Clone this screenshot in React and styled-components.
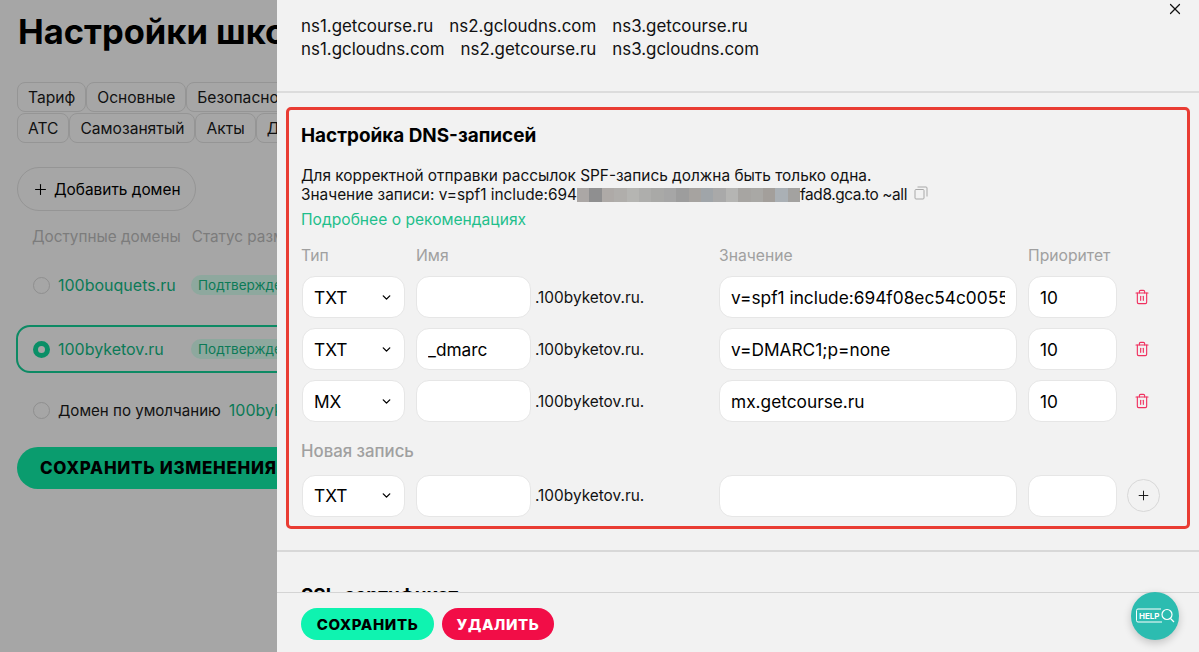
import React from 'react';
import styled, { createGlobalStyle } from 'styled-components';
import { ChevronDown, Plus, Trash2, X } from 'lucide-react';

const GlobalStyle = createGlobalStyle`
  html, body {
    margin: 0;
    height: 100%;
    overflow: hidden;
    font-family: Inter, "Noto Sans", sans-serif;
    color: #000;
  }
  * { box-sizing: border-box; }
`;

const Page = styled.div`
  display: flex;
  width: 1199px;
  height: 652px;
  overflow: hidden;
  background: #a6a6a6;
`;

/* settings page behind the overlay */
const Back = styled.div`
  flex: 0 0 277px;
  overflow: hidden;
  padding: 12px 0 0 17px;
`;

const Inner = styled.div`
  width: 620px;
`;

const PageTitle = styled.h1`
  margin: 0 0 30px 1px;
  font-size: 34.5px;
  line-height: 40px;
  font-weight: 700;
`;

const Tabs = styled.div`
  display: flex;
  flex-wrap: wrap;
  width: 340px;
  gap: 1px 0;
`;

const Tab = styled.div`
  height: 30px;
  padding: 0 10px;
  display: flex;
  align-items: center;
  font-size: 15.6px;
  border: 1px solid #959595;
  border-radius: 8px;
  color: #111;
`;

const AddDomain = styled.div`
  display: inline-flex;
  align-items: center;
  gap: 5px;
  height: 44px;
  margin-top: 24px;
  padding: 0 14px;
  font-size: 15.4px;
  border: 1px solid #959595;
  border-radius: 22px;
`;

const DomainHead = styled.div`
  display: flex;
  gap: 11px;
  margin: 16px 0 0 15px;
  font-size: 15.3px;
  line-height: 20px;
  color: #7c7c7c;
`;

const DomainRow = styled.div`
  display: flex;
  align-items: center;
  height: 48px;
  margin: ${p => p.$mt}px 0 0 -1px;
  padding-left: 15px;
  gap: 8px;
  border: 2px solid ${p => (p.$active ? '#0d8a64' : 'transparent')};
  border-radius: 14px;
`;

const Radio = styled.span`
  flex: none;
  width: 17px;
  height: 17px;
  border-radius: 50%;
  border: ${p => (p.$on ? '5px solid #0a8f67' : '1px solid #8f8f8f')};
`;

const DomainName = styled.span`
  width: 125px;
  font-size: 16px;
  color: #0c7a57;
`;

const Badge = styled.span`
  padding: 2px 7px;
  font-size: 13.5px;
  line-height: 16px;
  color: #0c7a57;
  background: #8ea89e;
  border-radius: 10px;
`;

const DefaultText = styled.span`
  font-size: 15.1px;
  color: #111;
`;

const DefaultDomain = styled.span`
  font-size: 16px;
  color: #0c7a57;
`;

const SaveChanges = styled.div`
  display: flex;
  align-items: center;
  width: 320px;
  height: 42px;
  margin-top: 13px;
  padding-left: 23px;
  font-size: 17px;
  font-weight: 800;
  letter-spacing: 0.7px;
  white-space: nowrap;
  background: #0a9c6e;
  border-radius: 21px;
`;

/* side panel */
const Panel = styled.div`
  position: relative;
  flex: 1;
  display: flex;
  flex-direction: column;
  min-width: 0;
  background: #f2f2f2;
`;

const Close = styled.button`
  position: absolute;
  top: 0;
  right: 15px;
  display: flex;
  padding: 0;
  border: none;
  background: none;
  color: #111;
`;

const Body = styled.div`
  flex: 1;
  min-height: 0;
  overflow: hidden;
`;

const Servers = styled.div`
  height: 93px;
  padding: 15px 0 0 24px;
  font-size: 16.9px;
  line-height: 23px;
  color: #111;
  border-bottom: 2px solid #dcdcdc;
`;

const ServerRow = styled.div`
  display: flex;
  gap: 16px;
`;

const DnsBox = styled.section`
  height: 422px;
  margin: 14px 9px 0 9px;
  padding: 14px 11px 0 12px;
  border: 3px solid #e93c33;
  border-radius: 5px;
`;

const BoxTitle = styled.h2`
  margin: 0 0 18px;
  font-size: 18.9px;
  line-height: 24px;
  font-weight: 700;
`;

const Note = styled.div`
  font-size: 15.4px;
  line-height: 19px;
  color: #111;
`;

const NoteLine = styled.div`
  display: flex;
  align-items: center;
  white-space: nowrap;
`;

const Mosaic = styled.span`
  display: inline-flex;
  height: 14px;
`;

const MosaicCell = styled.span`
  width: 12.4px;
  background: ${p => p.$tone};
`;

const RecordTail = styled.span`
  letter-spacing: -0.4px;
`;

const CopyIcon = styled.svg`
  margin: -3px 0 0 7px;
`;

const More = styled.a`
  display: block;
  margin-top: 6px;
  font-size: 15.6px;
  line-height: 19px;
  color: #1fbf8c;
`;

const Grid = styled.div`
  display: grid;
  grid-template-columns: 115px 115px 188px 298px 100px 43px;
  margin-top: 17px;
`;

const Head = styled.div`
  height: 20px;
  margin-left: ${p => p.$ml || 0}px;
  margin-bottom: 10px;
  font-size: 15.7px;
  line-height: 20px;
  color: #a0a0a0;
`;

const Cell = styled.div`
  display: flex;
  align-items: center;
  height: 42px;
  margin-bottom: 10px;
  margin-left: ${p => p.$ml || 0}px;
`;

const Select = styled.div`
  display: flex;
  align-items: center;
  justify-content: space-between;
  width: 103px;
  height: 42px;
  margin-left: 1px;
  padding: 0 11px 0 11px;
  font-size: 17.3px;
  background: #fff;
  border: 1px solid #e6e6e6;
  border-radius: 13px;
`;

const Field = styled.input`
  width: ${p => p.$w}px;
  height: 42px;
  padding: 0 11px;
  font: inherit;
  font-size: 17.3px;
  color: #000;
  background: #fff;
  border: 1px solid #e6e6e6;
  border-radius: 13px;
  outline: none;
`;

const Suffix = styled.span`
  margin-left: 4px;
  font-size: 15.4px;
  color: #111;
`;

const TrashButton = styled.span`
  display: flex;
  margin-left: 17px;
  color: #f0305f;
`;

const NewLabel = styled.div`
  grid-column: 1 / -1;
  height: 42.500px;
  padding-top: 9px;
  font-size: 16.8px;
  line-height: 20px;
  font-weight: 500;
  color: #a0a0a0;
`;

const AddButton = styled.button`
  display: flex;
  align-items: center;
  justify-content: center;
  width: 33px;
  height: 33px;
  margin-left: 10px;
  padding: 0;
  background: #f2f2f2;
  border: 1px solid #d8d8d8;
  border-radius: 50%;
  color: #111;
`;

const Rule = styled.hr`
  margin: 21px 0 0;
  border: none;
  border-top: 2px solid #d8d8d8;
`;

const SslTitle = styled.h2`
  margin: 32px 0 0 24px;
  font-size: 18.9px;
  line-height: 24px;
  font-weight: 700;
`;

const Footer = styled.footer`
  flex: 0 0 60px;
  display: flex;
  align-items: flex-start;
  gap: 8px;
  padding: 15px 0 0 24px;
  background: #f2f2f2;
  border-top: 1px solid #d4d4d4;
`;

const Action = styled.button`
  height: 32px;
  width: ${p => p.$w}px;
  padding: 0;
  font: inherit;
  font-size: 15px;
  font-weight: 800;
  letter-spacing: 0.6px;
  color: ${p => (p.$danger ? '#fff' : '#000')};
  background: ${p => (p.$danger ? '#f20d47' : '#0ff3b0')};
  border: none;
  border-radius: 16px;
`;

const Help = styled.div`
  position: absolute;
  left: 854px;
  top: 592px;
  width: 48px;
  height: 48px;
  display: flex;
  align-items: center;
  justify-content: center;
  background: #2cbcb0;
  border-radius: 50%;
  box-shadow: 0 3px 8px rgba(0, 0, 0, 0.2);
`;

const HelpText = styled.text`
  font-size: 8px;
  font-weight: 700;
  fill: #fff;
`;

const mosaicTones = [
  '#aba7a5', '#8f8f90', '#aeaaa7', '#b0aeab', '#b5b5b2', '#aeaeac', '#a9a9a7', '#a6a6a6',
  '#9d9d9d', '#a6a3a0', '#a0a5a9', '#a9a9a9', '#b5b5b3', '#a7a5a2', '#a9a8a5', '#a39f9b',
  '#aab0b5', '#a3a2a0',
];

const records = [
  { type: 'TXT', name: '', value: 'v=spf1 include:694f08ec54c00558fad8.gca.to ~all', priority: '10' },
  { type: 'TXT', name: '_dmarc', value: 'v=DMARC1;p=none', priority: '10' },
  { type: 'MX', name: '', value: 'mx.getcourse.ru', priority: '10' },
];

const TypeSelect = ({ type }) => (
  <Select>
    {type}
    <ChevronDown size={13} strokeWidth={2.5} />
  </Select>
);

const RecordCells = ({ type, name, value, priority, action }) => (
  <>
    <Cell><TypeSelect type={type} /></Cell>
    <Cell><Field $w={115} defaultValue={name} /></Cell>
    <Cell><Suffix>.100byketov.ru.</Suffix></Cell>
    <Cell><Field $w={298} defaultValue={value} /></Cell>
    <Cell $ml={11}><Field $w={89} defaultValue={priority} /></Cell>
    <Cell>{action}</Cell>
  </>
);

export default function App() {
  return (
    <Page>
      <GlobalStyle />
      <Back>
        <Inner>
          <PageTitle>Настройки школы</PageTitle>
          <Tabs>
            <Tab>Тариф</Tab>
            <Tab>Основные</Tab>
            <Tab>Безопасность</Tab>
            <Tab>АТС</Tab>
            <Tab>Самозанятый</Tab>
            <Tab>Акты</Tab>
            <Tab>Домены</Tab>
          </Tabs>
          <AddDomain><Plus size={17} strokeWidth={1.5} />Добавить домен</AddDomain>
          <DomainHead>
            <span>Доступные домены</span>
            <span>Статус размещения</span>
          </DomainHead>
          <DomainRow $mt={14}>
            <Radio />
            <DomainName>100bouquets.ru</DomainName>
            <Badge>Подтверждено</Badge>
          </DomainRow>
          <DomainRow $mt={16} $active>
            <Radio $on />
            <DomainName>100byketov.ru</DomainName>
            <Badge>Подтверждено</Badge>
          </DomainRow>
          <DomainRow $mt={13}>
            <Radio />
            <DefaultText>Домен по умолчанию</DefaultText>
            <DefaultDomain>100byketov.ru</DefaultDomain>
          </DomainRow>
          <SaveChanges>СОХРАНИТЬ ИЗМЕНЕНИЯ</SaveChanges>
        </Inner>
      </Back>
      <Panel>
        <Close aria-label="close"><X size={18} strokeWidth={1.6} /></Close>
        <Body>
          <Servers>
            <ServerRow>
              <span>ns1.getcourse.ru</span>
              <span>ns2.gcloudns.com</span>
              <span>ns3.getcourse.ru</span>
            </ServerRow>
            <ServerRow>
              <span>ns1.gcloudns.com</span>
              <span>ns2.getcourse.ru</span>
              <span>ns3.gcloudns.com</span>
            </ServerRow>
          </Servers>
          <DnsBox>
            <BoxTitle>Настройка DNS-записей</BoxTitle>
            <Note>
              <NoteLine>Для корректной отправки рассылок SPF-запись должна быть только одна.</NoteLine>
              <NoteLine>
                Значение записи: v=spf1 include:694
                <Mosaic>
                  {mosaicTones.map((tone, i) => <MosaicCell key={i} $tone={tone} />)}
                </Mosaic>
                <RecordTail>fad8.gca.to ~all</RecordTail>
                <CopyIcon width="14" height="14" viewBox="0 0 14 14" fill="none" stroke="#a8a8a8" strokeWidth="1">
                  <rect x="1" y="3.500" width="9" height="9.500" rx="1" />
                  <path d="M3.500 1h8.500a1 1 0 0 1 1 1v8.500" />
                </CopyIcon>
              </NoteLine>
            </Note>
            <More>Подробнее о рекомендациях</More>
            <Grid>
              <Head>Тип</Head>
              <Head>Имя</Head>
              <Head />
              <Head>Значение</Head>
              <Head $ml={11}>Приоритет</Head>
              <Head />
              {records.map((record, i) => (
                <RecordCells
                  key={i}
                  {...record}
                  action={<TrashButton><Trash2 size={16} strokeWidth={1.7} /></TrashButton>}
                />
              ))}
              <NewLabel>Новая запись</NewLabel>
              <RecordCells
                type="TXT"
                name=""
                value=""
                priority=""
                action={<AddButton aria-label="add"><Plus size={15} strokeWidth={1.5} /></AddButton>}
              />
            </Grid>
          </DnsBox>
          <Rule />
          <SslTitle>SSL-сертификат</SslTitle>
        </Body>
        <Footer>
          <Action $w={133}>СОХРАНИТЬ</Action>
          <Action $w={112} $danger>УДАЛИТЬ</Action>
        </Footer>
        <Help>
          <svg width="40" height="26" viewBox="0 0 40 26" fill="none" stroke="#fff">
            <path d="M26 6H3a1.500 1.500 0 0 0-1.500 1.500v10A1.500 1.500 0 0 0 3 19h24" strokeWidth="1" />
            <HelpText x="4" y="15.500" stroke="none">HELP</HelpText>
            <circle cx="32" cy="11.500" r="5" strokeWidth="1.200" />
            <path d="M35.500 15.500l3.500 3.500" strokeWidth="1.200" />
          </svg>
        </Help>
      </Panel>
    </Page>
  );
}
